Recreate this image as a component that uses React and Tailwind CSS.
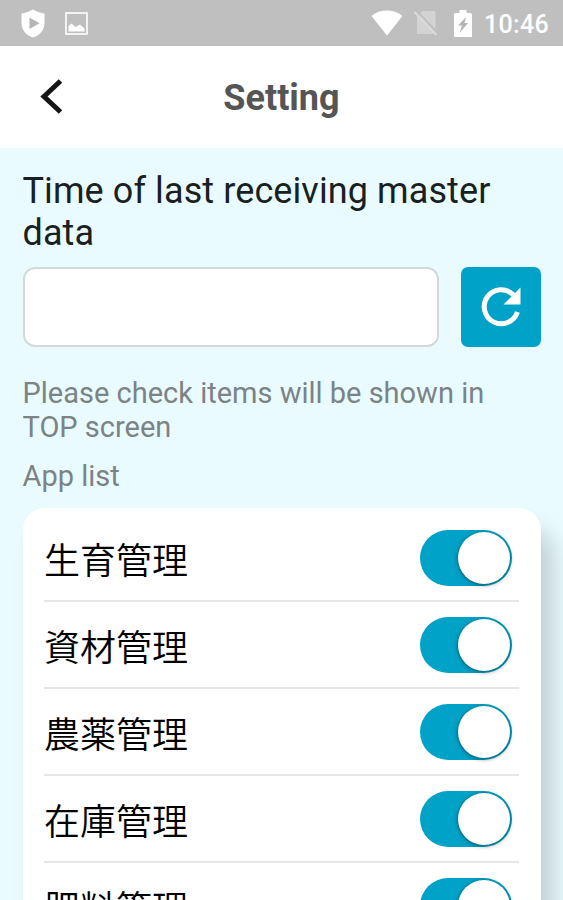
import React, { useState } from 'react'

const APPS = [
  { id: 'growth', label: '生育管理' },
  { id: 'material', label: '資材管理' },
  { id: 'pesticide', label: '農薬管理' },
  { id: 'stock', label: '在庫管理' },
  { id: 'fertilizer', label: '肥料管理' },
]

const StatusBar = () => (
  <div className="flex h-[46px] shrink-0 items-center bg-[#bfbfbf] text-white">
    <svg className="ml-[21px] h-[29px] w-6" viewBox="0 0 24 29" fill="none">
      <path d="M12 0.5C8 3 4 4 0.5 4.5V14C0.5 21 5 26 12 28.5C19 26 23.5 21 23.5 14V4.5C20 4 16 3 12 0.5Z" fill="currentColor" />
      <path d="M8.5 8.5L18.5 14.2L8.5 20Z" fill="#b5b5b5" />
    </svg>
    <svg className="ml-5 h-[23px] w-[23px]" viewBox="0 0 23 23" fill="none">
      <rect x="1" y="1" width="21" height="21" stroke="currentColor" strokeWidth="1.6" />
      <path d="M3.5 19.5V14L6.5 11.5L10.5 15L15 12.5L19.5 16.5V19.5Z" fill="currentColor" />
    </svg>
    <div className="flex-1" />
    <svg className="h-[26px] w-8" viewBox="0 0 32 26">
      <path d="M0.5 6C9 -1.3 23 -1.3 31.5 6L16 25.5Z" fill="currentColor" />
    </svg>
    <svg className="ml-[11px] h-[26px] w-6" viewBox="0 0 24 26">
      <path d="M8.5 1H20Q21.5 1 21.5 2.5V24H3V6.5Z" fill="#d3d3d3" />
      <path d="M2 0L24 23.5" stroke="#bfbfbf" strokeWidth="2" />
      <path d="M0.5 2L22.5 25" stroke="#dadada" strokeWidth="2" />
    </svg>
    <svg className="ml-4 h-[27px] w-[18px]" viewBox="0 0 18 27">
      <path d="M5.5 0H12.5V3H16.5Q18 3 18 4.5V27H0V4.5Q0 3 1.5 3H5.5Z" fill="currentColor" />
      <path d="M12 7L4 15.5H8L5.5 23L14 13H10.5Z" fill="#b5b5b5" />
    </svg>
    <span className="mr-[14px] ml-[12px] w-[65px] pt-[3px] text-[25px] font-medium tracking-[0.3px] whitespace-nowrap">10:46</span>
  </div>
)

const Header = () => (
  <header className="grid h-[102px] shrink-0 grid-cols-3 items-center bg-white">
    <button type="button" aria-label="Back" className="ml-10 justify-self-start">
      <svg className="h-9 w-6" viewBox="0 0 24 36" fill="none">
        <path d="M20.5 2L4 17.5L20.5 33" stroke="#161616" strokeWidth="5" />
      </svg>
    </button>
    <h1 className="pt-0.5 text-center text-[36px] font-bold text-[#555555]">Setting</h1>
  </header>
)

const Toggle = ({ checked, onChange }) => (
  <button
    type="button"
    role="switch"
    aria-checked={checked}
    onClick={onChange}
    className={`flex h-14 w-[92px] items-center rounded-full p-0.5 ${checked ? 'justify-end bg-[#00a2c7]' : 'justify-start bg-gray-300'}`}
  >
    <span className="h-[52px] w-[52px] rounded-full bg-white shadow-[0_1px_4px_rgba(0,0,0,0.5)]" />
  </button>
)

export default function App() {
  const [enabled, setEnabled] = useState(APPS.map(app => app.id))

  const handleToggle = (id) => {
    setEnabled(prev => (prev.includes(id) ? prev.filter(item => item !== id) : [...prev, id]))
  }

  return (
    <div className="flex h-[900px] w-[563px] flex-col overflow-hidden bg-[#e9fbff] font-[Roboto,'Noto_Sans_CJK_JP',sans-serif]">
      <StatusBar />
      <Header />

      <main className="flex flex-col pr-[22px] pl-[22.5px] pt-[22px]">
        <h2 className="text-[36px] leading-[42px] tracking-[0.1px] text-[#1a1f21]">
          Time of last receiving master<br />data
        </h2>

        {/* Last sync time */}
        <div className="mt-[13px] flex gap-[22px]">
          <input type="text" readOnly className="h-20 min-w-0 flex-1 rounded-[12px] border-2 border-[#d3d8da] bg-white" />
          <button type="button" aria-label="Refresh" className="flex h-20 w-20 items-center justify-center rounded-[7px] bg-[#00a2c7]">
            <svg className="h-[42px] w-[42px]" viewBox="0 0 42 42" fill="none">
              <path d="M37.4 26A17 17 0 1 1 33.5 9" stroke="white" strokeWidth="5" />
              <path d="M40.5 1.5V18.5H23.5Z" fill="white" />
            </svg>
          </button>
        </div>

        <p className="mt-[29px] text-[29px] leading-[34px] text-[#7c8385]">
          Please check items will be shown in<br />TOP screen
        </p>
        <p className="mt-[15px] text-[29px] leading-[34px] text-[#7c8385]">App list</p>

        {/* App list */}
        <ul className="mt-[15px] rounded-[22px] bg-white pt-[7px] pr-[22px] pb-2 pl-[21.5px] shadow-[13px_22px_22px_rgba(0,0,0,0.17)]">
          {APPS.map(app => (
            <li key={app.id} className="flex h-[87px] items-center justify-between border-b-2 border-[#e6e6e6] pr-[7px]">
              <span className="font-['Noto_Sans_CJK_JP',sans-serif] text-[36px] leading-[52px] font-[350] text-black">{app.label}</span>
              <Toggle checked={enabled.includes(app.id)} onChange={() => handleToggle(app.id)} />
            </li>
          ))}
        </ul>
      </main>
    </div>
  )
}
